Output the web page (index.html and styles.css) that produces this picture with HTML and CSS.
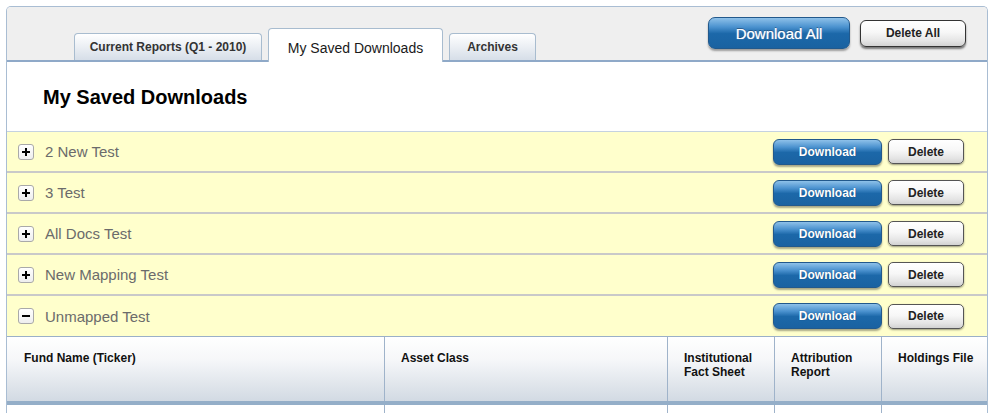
FILE: index.html
```html
<!DOCTYPE html>
<html>
<head>
<meta charset="utf-8">
<title>My Saved Downloads</title>
<link rel="stylesheet" href="styles.css">
</head>
<body>
<div class="panel">
  <div class="topbar">
    <div class="tabs">
      <div class="tab tab-current">Current Reports (Q1 - 2010)</div>
      <div class="tab active">My Saved Downloads</div>
      <div class="tab tab-archives">Archives</div>
    </div>
    <div class="actions">
      <button class="btn-blue big">Download All</button>
      <button class="btn-white big">Delete All</button>
    </div>
  </div>
  <div class="title-area"><h1>My Saved Downloads</h1></div>
  <div class="rows">
    <div class="row">
      <span class="toggle"><svg width="10" height="10" viewBox="0 0 10 10"><path d="M1 5H9M5 1V9" stroke="#000" stroke-width="2"/></svg></span>
      <span class="name">2 New Test</span>
      <button class="btn-blue">Download</button>
      <button class="btn-white">Delete</button>
    </div>
    <div class="row">
      <span class="toggle"><svg width="10" height="10" viewBox="0 0 10 10"><path d="M1 5H9M5 1V9" stroke="#000" stroke-width="2"/></svg></span>
      <span class="name">3 Test</span>
      <button class="btn-blue">Download</button>
      <button class="btn-white">Delete</button>
    </div>
    <div class="row">
      <span class="toggle"><svg width="10" height="10" viewBox="0 0 10 10"><path d="M1 5H9M5 1V9" stroke="#000" stroke-width="2"/></svg></span>
      <span class="name">All Docs Test</span>
      <button class="btn-blue">Download</button>
      <button class="btn-white">Delete</button>
    </div>
    <div class="row">
      <span class="toggle"><svg width="10" height="10" viewBox="0 0 10 10"><path d="M1 5H9M5 1V9" stroke="#000" stroke-width="2"/></svg></span>
      <span class="name">New Mapping Test</span>
      <button class="btn-blue">Download</button>
      <button class="btn-white">Delete</button>
    </div>
    <div class="row">
      <span class="toggle"><svg width="10" height="10" viewBox="0 0 10 10"><path d="M1 5H9" stroke="#000" stroke-width="2"/></svg></span>
      <span class="name">Unmapped Test</span>
      <button class="btn-blue">Download</button>
      <button class="btn-white">Delete</button>
    </div>
  </div>
  <div class="grid head">
    <div class="cell first">Fund Name (Ticker)</div>
    <div class="cell">Asset Class</div>
    <div class="cell">Institutional<br>Fact Sheet</div>
    <div class="cell">Attribution<br>Report</div>
    <div class="cell last">Holdings File</div>
  </div>
  <div class="grid body">
    <div class="cell first"></div>
    <div class="cell"></div>
    <div class="cell"></div>
    <div class="cell"></div>
    <div class="cell last"></div>
  </div>
</div>
</body>
</html>
```
FILE: styles.css
```css
html, body {
  margin: 0;
  padding: 0;
  background: #ffffff;
  font-family: "Liberation Sans", Arial, sans-serif;
}

.panel {
  margin: 6px 0 0 6px;
  width: 980px;
  border: 1px solid #a9bdd3;
  border-bottom: none;
  border-radius: 5px 5px 0 0;
  overflow: hidden;
}

.topbar {
  height: 53px;
  background: #efefef;
  border-bottom: 2px solid #8fa9c8;
  display: flex;
  padding-left: 67px;
  padding-right: 21px;
}

.tabs {
  display: flex;
  align-items: flex-end;
  gap: 6px;
  align-self: flex-end;
  margin-bottom: -2px;
}

.tab {
  box-sizing: border-box;
  height: 27px;
  border: 1px solid #a8bccf;
  border-bottom: none;
  border-radius: 4px 4px 0 0;
  background: linear-gradient(#ffffff, #d6dee8);
  font-size: 12px;
  font-weight: bold;
  color: #333333;
  display: flex;
  align-items: center;
  justify-content: center;
  margin-bottom: 2px;
  white-space: nowrap;
}

.tab-current {
  width: 188px;
}

.tab-archives {
  width: 87px;
}

.tab.active {
  width: 175px;
  height: 34px;
  margin-bottom: 0;
  background: #ffffff;
  font-size: 14px;
  font-weight: normal;
  color: #1a1a1a;
  padding-top: 4px;
}

.actions {
  margin-left: auto;
  margin-top: 10px;
  align-self: flex-start;
  display: flex;
  align-items: center;
  gap: 10px;
}

button {
  font-family: "Liberation Sans", Arial, sans-serif;
  cursor: pointer;
  padding: 0;
}

.btn-blue {
  width: 109px;
  height: 26px;
  border: 1px solid #22598c;
  border-radius: 6px;
  background: linear-gradient(#8ec1e9 0%, #4b92cf 30%, #1c68a9 52%, #1a62a1 100%);
  color: #ffffff;
  font-size: 12px;
  font-weight: bold;
  text-shadow: 0 0 1px rgba(0, 40, 80, 0.6);
  box-shadow: 0 2px 2px rgba(0, 0, 0, 0.35);
}

.btn-white {
  width: 76px;
  height: 25px;
  border: 1px solid #555555;
  border-radius: 5px;
  background: linear-gradient(#ffffff 0%, #f7f7f7 45%, #e4e4e4 80%, #d2d2d2 100%);
  color: #222222;
  font-size: 12px;
  font-weight: bold;
  box-shadow: 0 1px 2px rgba(0, 0, 0, 0.4);
}

.btn-blue.big {
  width: 142px;
  height: 32px;
  font-size: 15px;
  font-weight: normal;
  text-shadow: 0 0 1px rgba(255, 255, 255, 0.7), 0 -1px 0 rgba(0, 30, 70, 0.5);
  border-radius: 7px;
}

.btn-white.big {
  width: 106px;
  height: 27px;
  border-color: #333333;
  border-radius: 6px;
  box-shadow: 0 2px 2px rgba(0, 0, 0, 0.5);
}

.title-area {
  height: 69px;
  border-bottom: 1px solid #c5d2e0;
  display: flex;
  align-items: center;
  padding-left: 36px;
}

.title-area h1 {
  margin: 0;
  font-size: 20px;
  font-weight: bold;
  color: #000000;
  padding-top: 1px;
}

.row {
  height: 39px;
  background: #ffffcc;
  border-bottom: 2px solid #c9c9c9;
  display: flex;
  align-items: center;
  padding-left: 11px;
  padding-right: 23px;
  gap: 6px;
}

.row:last-child {
  height: 40px;
  border-bottom: 1px solid #9bb0c8;
}

.toggle {
  width: 14px;
  height: 14px;
  border: 1px solid #a9a9a9;
  border-radius: 3px;
  background: linear-gradient(#ffffff, #eeeeee);
  display: flex;
  align-items: center;
  justify-content: center;
}

.name {
  margin-left: 5px;
  font-size: 15px;
  color: #6b6b6b;
  flex: 1;
}

.grid {
  display: grid;
  grid-template-columns: 378px 283px 107px 107px 105px;
}

.head {
  height: 64px;
  background: linear-gradient(#ffffff 0%, #f6f7f9 35%, #d2dae3 100%);
  border-bottom: 4px solid #94aec8;
}

.cell {
  border-right: 1px solid #9fb3ca;
  padding: 14px 0 0 16px;
  font-size: 12px;
  line-height: 14px;
  font-weight: bold;
  color: #111111;
}

.cell.first {
  padding-left: 17px;
}

.cell.last {
  border-right: none;
}

.body {
  height: 20px;
  background: #ffffff;
}
```
